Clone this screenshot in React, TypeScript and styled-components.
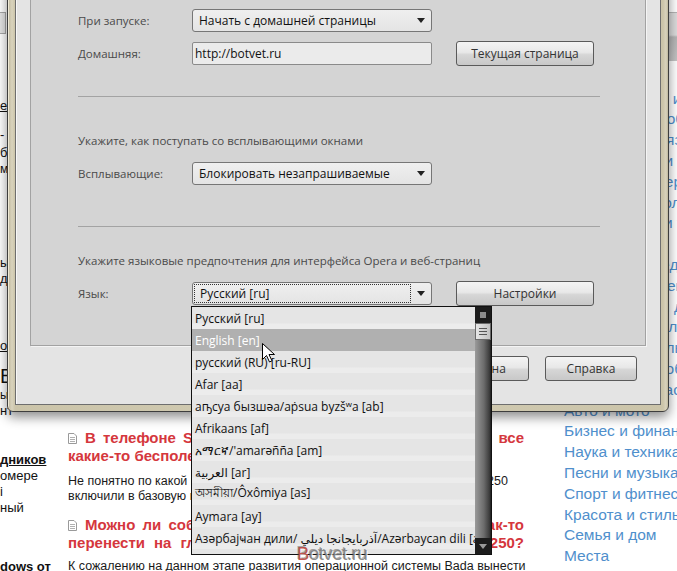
import React from 'react';
import styled, { createGlobalStyle } from 'styled-components';

const GlobalStyle = createGlobalStyle`
  html, body {
    margin: 0;
    padding: 0;
    background: #fff;
  }
  body {
    width: 677px;
    height: 571px;
    overflow: hidden;
  }
`;

const Screen = styled.div`
  position: relative;
  width: 677px;
  height: 571px;
  overflow: hidden;
  background: #fff;
  font-family: "Liberation Sans", Arial, sans-serif;
`;

/* ---------- web page behind the dialog ---------- */

const Page = styled.div`
  display: flex;
  align-items: flex-start;
`;

const LeftColumn = styled.div`
  width: 60px;
  flex-shrink: 0;
  overflow: hidden;
`;

const SearchStub = styled.div`
  margin-top: 12px;
  width: 5px;
  height: 20px;
  border: 1px solid #a8a8a8;
  border-left: none;
  background: #e4e4e4;
`;

const SideLine = styled.div<{ $gap: number; $bold?: boolean; $underline?: boolean; $size?: number }>`
  margin-top: ${(p) => p.$gap}px;
  font-size: ${(p) => p.$size ?? 13}px;
  line-height: ${(p) => (p.$size && p.$size > 16 ? 20 : 16)}px;
  font-weight: ${(p) => (p.$bold ? 700 : 400)};
  text-decoration: ${(p) => (p.$underline ? 'underline' : 'none')};
  color: #111;
  white-space: nowrap;
`;

const MainColumn = styled.div`
  width: 456px;
  margin-left: 8px;
  padding-top: 429px;
  flex-shrink: 0;
`;

const ArticleTitle = styled.div<{ $gap: number; $fill?: boolean }>`
  margin-top: ${(p) => p.$gap}px;
  font-size: 15px;
  line-height: 17.5px;
  font-weight: 700;
  color: #d5373d;
  text-align: justify;
  text-align-last: ${(p) => (p.$fill ? 'justify' : 'auto')};
`;

const NoWrap = styled.span`
  white-space: nowrap;
`;

const DocIcon = styled.svg`
  width: 9px;
  height: 11px;
  margin-right: 8px;
  vertical-align: -1px;
`;

const ArticleText = styled.p<{ $gap: number }>`
  margin: ${(p) => p.$gap}px -10px 0 0;
  font-size: 12.5px;
  line-height: 15px;
  color: #1a1a1a;
`;

const RightColumn = styled.div`
  width: 200px;
  margin-left: 40px;
  flex-shrink: 0;
`;

const Banner = styled.div`
  margin-top: 12px;
  height: 48px;
  border-top: 1px solid #b4b4b4;
  background: linear-gradient(#dcdcdc 0, #dcdcdc 22px, #b6b6b6 24px, #c4c4c4 100%);
`;

const CategoryList = styled.ul`
  list-style: none;
  margin: 27.6px 0 0;
  padding: 0;
`;

const Category = styled.li`
  font-size: 15.5px;
  line-height: 20.8px;
  color: #4f8fcc;
  white-space: nowrap;
`;

/* ---------- Opera preferences dialog ---------- */

const Window = styled.div`
  position: absolute;
  left: 7px;
  top: -60px;
  width: 662px;
  box-sizing: border-box;
  padding: 26px 7px 6px;
  border: 1px solid #3e3e3e;
  border-radius: 0 0 6px 6px;
  background: linear-gradient(90deg, #bdb69b 0, #d9d3bd 4px, #cbc4a9 7px, #d2ccb4 50%, #cbc4a9 655px, #d9d3bd 658px, #bdb69b 100%);
  box-shadow: 0 5px 12px rgba(0, 0, 0, 0.45), inset 1px 1px 0 #efe9d6;
  font-family: "Open Sans", "Noto Sans", "DejaVu Sans", sans-serif;
`;

const Client = styled.div`
  display: flex;
  flex-direction: column;
  gap: 10px;
  padding: 14px 14px 23px;
  border: 1px solid #6e6e6e;
  background: #e4e4e4;
  box-shadow: inset 1px 1px 0 #f7f7f7;
`;

const Panel = styled.div`
  display: flex;
  flex-direction: column;
  padding: 25px 45px 39px 47px;
  border: 1px solid #a2a2a2;
  background: #d4d4d4;
  box-shadow: 1px 1px 0 #f4f4f4;
`;

const FieldRow = styled.div<{ $gap?: number }>`
  display: flex;
  align-items: center;
  height: 25px;
  margin-top: ${(p) => p.$gap ?? 0}px;
`;

const Label = styled.div`
  width: 114px;
  font-size: 11.5px;
  color: #4a4a4a;
  flex-shrink: 0;
`;

const Separator = styled.div<{ $gap: number }>`
  margin-top: ${(p) => p.$gap}px;
  height: 0;
  border-top: 1px solid #a3a3a3;
`;

const Hint = styled.div<{ $gap: number }>`
  margin-top: ${(p) => p.$gap}px;
  font-size: 11.5px;
  line-height: 16px;
  color: #4a4a4a;
`;

const SelectWrap = styled.div`
  position: relative;
  width: 240px;
  flex-shrink: 0;
`;

const SelectBox = styled.div`
  display: flex;
  height: 23px;
  box-sizing: border-box;
  border: 1px solid #767676;
  border-radius: 3px;
  background: linear-gradient(#efefef, #e4e4e4);
`;

const SelectValue = styled.div<{ $focused?: boolean }>`
  flex: 1;
  display: flex;
  align-items: center;
  margin: ${(p) => (p.$focused ? '1px 0 1px 1px' : '0')};
  padding-left: ${(p) => (p.$focused ? 5 : 6)}px;
  border: ${(p) => (p.$focused ? '1px dotted #333' : 'none')};
  font-size: 12px;
  color: #111;
  white-space: nowrap;
`;

const SelectArrow = styled.div`
  width: 20px;
  display: flex;
  align-items: center;
  justify-content: center;

  &::after {
    content: '';
    border-left: 4px solid transparent;
    border-right: 4px solid transparent;
    border-top: 5px solid #222;
  }
`;

const TextInput = styled.div`
  width: 240px;
  height: 23px;
  box-sizing: border-box;
  display: flex;
  align-items: center;
  padding-left: 2px;
  border: 1px solid #8a8a8a;
  border-radius: 2px;
  background: #ebebeb;
  font-size: 12px;
  color: #111;
  flex-shrink: 0;
`;

const Button = styled.button<{ $width: number; $offset?: number }>`
  width: ${(p) => p.$width}px;
  height: 25px;
  margin-left: ${(p) => p.$offset ?? 0}px;
  padding: 0;
  box-sizing: border-box;
  border: 1px solid #5a5a5a;
  border-radius: 3px;
  background: linear-gradient(#f4f4f4 0%, #e8e8e8 45%, #d6d6d6 55%, #c8c8c8 100%);
  font-family: inherit;
  font-size: 12px;
  color: #333;
  flex-shrink: 0;
`;

const ButtonBar = styled.div`
  display: flex;
  justify-content: flex-end;
  gap: 16px;
  margin-right: 9px;
`;

/* dropdown list that is open under "Язык" */

const DropList = styled.div`
  position: absolute;
  left: -1px;
  top: 24px;
  z-index: 10;
  width: 301px;
  height: 249px;
  box-sizing: border-box;
  display: flex;
  border: 1px solid #111;
  background: #e6e6e6;
`;

const Options = styled.div`
  flex: 1;
  overflow: hidden;
`;

const Option = styled.div<{ $active?: boolean }>`
  height: 22px;
  display: flex;
  align-items: center;
  padding-left: 3px;
  font-size: 12px;
  white-space: nowrap;
  overflow: hidden;
  color: ${(p) => (p.$active ? '#fff' : '#111')};
  background: ${(p) =>
    p.$active ? '#b0b0b0' : 'linear-gradient(#e5e5e5 0, #e5e5e5 16px, #ececec 17px, #ececec 100%)'};
`;

const ScrollBar = styled.div`
  width: 16px;
  display: flex;
  flex-direction: column;
  background: linear-gradient(90deg, #9a9a9a, #6c6c6c 55%, #3c3c3c 90%, #1e1e1e);
`;

const ScrollButton = styled.div<{ $down?: boolean }>`
  height: 16px;
  display: flex;
  align-items: center;
  justify-content: center;
  background: #1c1c1c;

  &::after {
    content: '';
    ${(p) =>
      p.$down
        ? `border-left: 4px solid transparent;
           border-right: 4px solid transparent;
           border-top: 5px solid #9a9a9a;`
        : `width: 6px; height: 6px; background: #8c8c8c;`}
  }
`;

const ScrollThumb = styled.div`
  height: 17px;
  box-sizing: border-box;
  display: flex;
  align-items: center;
  justify-content: center;
  border: 1px solid #6a6a6a;
  background: linear-gradient(90deg, #e6e6e6, #c2c2c2);

  &::after {
    content: '';
    width: 8px;
    height: 5px;
    border-top: 1px solid #555;
    border-bottom: 1px solid #555;
    background: linear-gradient(#555, #555) center / 8px 1px no-repeat;
  }
`;

const ScrollTrack = styled.div`
  flex: 1;
`;

const Cursor = styled.svg`
  position: absolute;
  left: 262px;
  top: 343px;
  z-index: 20;
  width: 13px;
  height: 20px;
`;

const Watermark = styled.div`
  position: absolute;
  left: 297px;
  top: 543px;
  z-index: 30;
  font-size: 18.5px;
  letter-spacing: -0.4px;
  color: rgba(120, 120, 120, 0.85);
  text-shadow: 1px 1px 0 rgba(255, 255, 255, 0.8), -1px -1px 0 rgba(70, 70, 70, 0.45);

  span {
    color: rgba(185, 64, 58, 0.9);
  }
`;

const sideLines = [
  { t: 'е', gap: 64, underline: true },
  { t: '-', gap: 13 },
  { t: 'б', gap: 2 },
  { t: 'мо', gap: 0, size: 12 },
  { t: 'ы', gap: 78 },
  { t: 'д', gap: 0 },
  { t: 'он', gap: 51, underline: true },
  { t: 'В', gap: 12, size: 20 },
  { t: 'ы', gap: 1, size: 12 },
  { t: 'нт', gap: 0 },
  { t: 'дников', gap: 33, bold: true, underline: true },
  { t: 'омере', gap: 0 },
  { t: 'і', gap: 0 },
  { t: 'ный', gap: 0 },
  { t: 'dows от', gap: 43, bold: true },
];

const categories = [
  'Компьютеры и интернет',
  'Программное обеспечение',
  'Мобильная связь',
  'Образование и наука',
  'Работа и карьера',
  'Общество и политика',
  'Путешествия и туризм',
  'Дом и дача',
  'Здоровье и медицина',
  'Кулинария и рецепты',
  'Развлечения и досуг',
  'Искусство и культура',
  'Юмор и приколы',
  'Знакомства и общение',
  'Животные и растения',
  'Авто и мото',
  'Бизнес и финансы',
  'Наука и техника',
  'Песни и музыка',
  'Спорт и фитнес',
  'Красота и стиль',
  'Семья и дом',
  'Места',
];

const languages = [
  'Русский [ru]',
  'English [en]',
  'русский (RU) [ru-RU]',
  'Afar [aa]',
  'аҧсуа бызшәа/aṗsua byzšʷa [ab]',
  'Afrikaans [af]',
  "አማርኛ/'amarəñña [am]",
  'العربية [ar]',
  'অসমীয়া/Ôxômiya [as]',
  'Aymara [ay]',
  'Азәрбајҹан дили/ آذربايجانجا ديلي/Azərbaycan dili [az]',
  'башҡорт теле [ba]',
];

const Doc = () => (
  <DocIcon viewBox="0 0 9 11">
    <path d="M0.5 0.5h5.5l2.5 2.5v7.5h-8z" fill="#fff" stroke="#9a9a9a" />
    <path d="M2 4.5h5M2 6.5h5M2 8.5h5" stroke="#b0b0b0" />
  </DocIcon>
);

const App: React.FC = () => {
  return (
    <Screen>
      <GlobalStyle />
      <Page>
        <LeftColumn>
          <SearchStub />
          {sideLines.map((l, i) => (
            <SideLine key={i} $gap={l.gap} $bold={l.bold} $underline={l.underline} $size={l.size}>
              {l.t}
            </SideLine>
          ))}
        </LeftColumn>

        <MainColumn>
          <ArticleTitle $gap={0}>
            <Doc />В телефоне Samsung Wave 525 почему-то встроены все <NoWrap>какие-то</NoWrap> бесполезные приложения
          </ArticleTitle>
          <ArticleText $gap={10}>
            Не понятно по какой причине разработчики в телефоне Samsung Wave 250 включили в базовую прошивку так много
            ненужных приложений.
          </ArticleText>
          <ArticleTitle $gap={12} $fill>
            <Doc />Можно ли собрать приложения в одну папку или <NoWrap>как-то</NoWrap> перенести на главный экран
            нового Samsung Wave 250?
          </ArticleTitle>
          <ArticleText $gap={8}>
            К сожалению на данном этапе развития операционной системы Bada вынести ярлыки на главный экран нельзя.
          </ArticleText>
        </MainColumn>

        <RightColumn>
          <Banner />
          <CategoryList>
            {categories.map((c) => (
              <Category key={c}>{c}</Category>
            ))}
          </CategoryList>
        </RightColumn>
      </Page>

      <Window>
        <Client>
          <Panel>
            <FieldRow>
              <Label>При запуске:</Label>
              <SelectWrap>
                <SelectBox>
                  <SelectValue>Начать с домашней страницы</SelectValue>
                  <SelectArrow />
                </SelectBox>
              </SelectWrap>
            </FieldRow>
            <FieldRow $gap={8}>
              <Label>Домашняя:</Label>
              <TextInput>http://botvet.ru</TextInput>
              <Button $width={138} $offset={24}>
                Текущая страница
              </Button>
            </FieldRow>

            <Separator $gap={30} />
            <Hint $gap={36}>Укажите, как поступать со всплывающими окнами</Hint>
            <FieldRow $gap={12}>
              <Label>Всплывающие:</Label>
              <SelectWrap>
                <SelectBox>
                  <SelectValue>Блокировать незапрашиваемые</SelectValue>
                  <SelectArrow />
                </SelectBox>
              </SelectWrap>
            </FieldRow>

            <Separator $gap={40} />
            <Hint $gap={26}>Укажите языковые предпочтения для интерфейса Opera и веб-страниц</Hint>
            <FieldRow $gap={12}>
              <Label>Язык:</Label>
              <SelectWrap>
                <SelectBox>
                  <SelectValue $focused>Русский [ru]</SelectValue>
                  <SelectArrow />
                </SelectBox>
                <DropList>
                  <Options>
                    {languages.map((lang, i) => (
                      <Option key={lang} $active={i === 1}>
                        {lang}
                      </Option>
                    ))}
                  </Options>
                  <ScrollBar>
                    <ScrollButton />
                    <ScrollThumb />
                    <ScrollTrack />
                    <ScrollButton $down />
                  </ScrollBar>
                </DropList>
              </SelectWrap>
              <Button $width={138} $offset={24}>
                Настройки
              </Button>
            </FieldRow>
          </Panel>

          <ButtonBar>
            <Button $width={91}>OK</Button>
            <Button $width={91}>Отмена</Button>
            <Button $width={92}>Справка</Button>
          </ButtonBar>
        </Client>
      </Window>

      <Cursor viewBox="0 0 13 20">
        <path d="M0.5 0.5v16l4-4 3 6.5 2.5-1.2-3-6.3h5.5z" fill="#fff" stroke="#000" strokeLinejoin="round" />
      </Cursor>

      <Watermark>
        <span>B</span>otvet.ru
      </Watermark>
    </Screen>
  );
};

export default App;
